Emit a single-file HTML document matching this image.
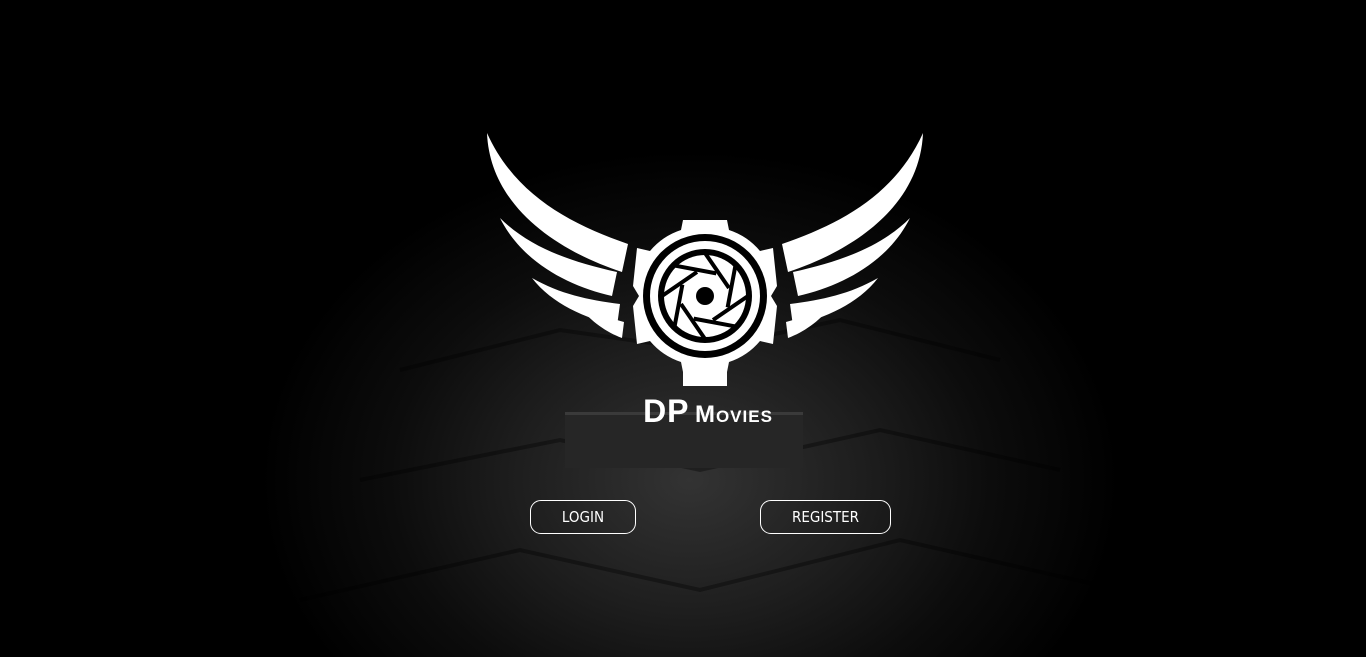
<!DOCTYPE html>
<html><head><meta charset="utf-8"><style>
html,body{margin:0;padding:0;width:1366px;height:657px;overflow:hidden;background:#000;}
.bg{position:absolute;inset:0;background:radial-gradient(ellipse 430px 330px at 690px 480px,#333 0%,#1e1e1e 40%,#0c0c0c 70%,#000 100%);}
.btn{position:absolute;top:500px;height:32px;border:1px solid #fff;border-radius:11px;color:#fff;font:15px "DejaVu Sans Condensed","Liberation Sans",sans-serif;text-align:center;line-height:32px;box-sizing:content-box;}
.title{position:absolute;left:0;width:1366px;top:393px;text-align:center;color:#fff;font-family:"Liberation Sans",sans-serif;font-weight:bold;padding-left:50px;box-sizing:border-box;letter-spacing:1px;}
</style></head><body>
<div class="bg"></div>
<svg width="1366" height="657" style="position:absolute;left:0;top:0">
 <g fill="none" stroke="#000" stroke-width="4" opacity=".35">
  <path d="M400 370 L560 330 L700 350 L840 320 L1000 360"/>
  <path d="M360 480 L560 440 L700 470 L880 430 L1060 470"/>
  <path d="M300 600 L520 550 L700 590 L900 540 L1120 590"/>
 </g>
 <rect x="565" y="412" width="238" height="56" fill="#262626"/>
 <rect x="565" y="412" width="238" height="3" fill="#3a3a3a"/>
 <g fill="#fff" id="w">
  <path d="M487 133 C490 205 555 250 622 272 L628 244 C570 224 515 195 487 133Z"/>
  <path d="M500 218 C522 262 568 286 612 296 L617 272 C572 262 530 248 500 218Z"/>
  <path d="M532 278 C552 304 585 318 617 326 L620 304 C588 300 560 294 532 278Z"/>
  <path d="M578 306 C592 322 606 332 622 338 L624 322 C610 318 595 313 578 306Z"/>
 </g>
 <use href="#w" transform="translate(1410 0) scale(-1 1)"/>
 <g transform="translate(705 296)">
  <path fill="#fff" d="M-22 -76 L22 -76 L24 -66 A68 68 0 0 1 55 -45 L68 -48 L72 -10 L66 0 L72 10 L68 48 L55 45 A68 68 0 0 1 24 66 L22 76 L22 90 L-22 90 L-22 76 L-24 66 A68 68 0 0 1 -55 45 L-68 48 L-72 10 L-66 0 L-72 -10 L-68 -48 L-55 -45 A68 68 0 0 1 -24 -66Z"/>
  <circle r="62" fill="#000"/>
  <circle r="55" fill="#fff"/>
  <circle r="47" fill="#000"/>
  <circle r="41" fill="#fff"/>
  <g stroke="#000" stroke-width="4">
   <g id="l"><line x1="0" y1="-43" x2="24" y2="-8"/></g>
   <use href="#l" transform="rotate(45)"/><use href="#l" transform="rotate(90)"/>
   <use href="#l" transform="rotate(135)"/><use href="#l" transform="rotate(180)"/>
   <use href="#l" transform="rotate(225)"/><use href="#l" transform="rotate(270)"/>
   <use href="#l" transform="rotate(315)"/>
  </g>
  <circle r="9" fill="#000"/>
 </g>
</svg>
<div class="title"><span style="font-size:32px">DP</span> <span style="font-size:24px;font-variant:small-caps">Movies</span></div>
<div class="btn" style="left:530px;width:104px">LOGIN</div>
<div class="btn" style="left:760px;width:129px">REGISTER</div>
</body></html>
